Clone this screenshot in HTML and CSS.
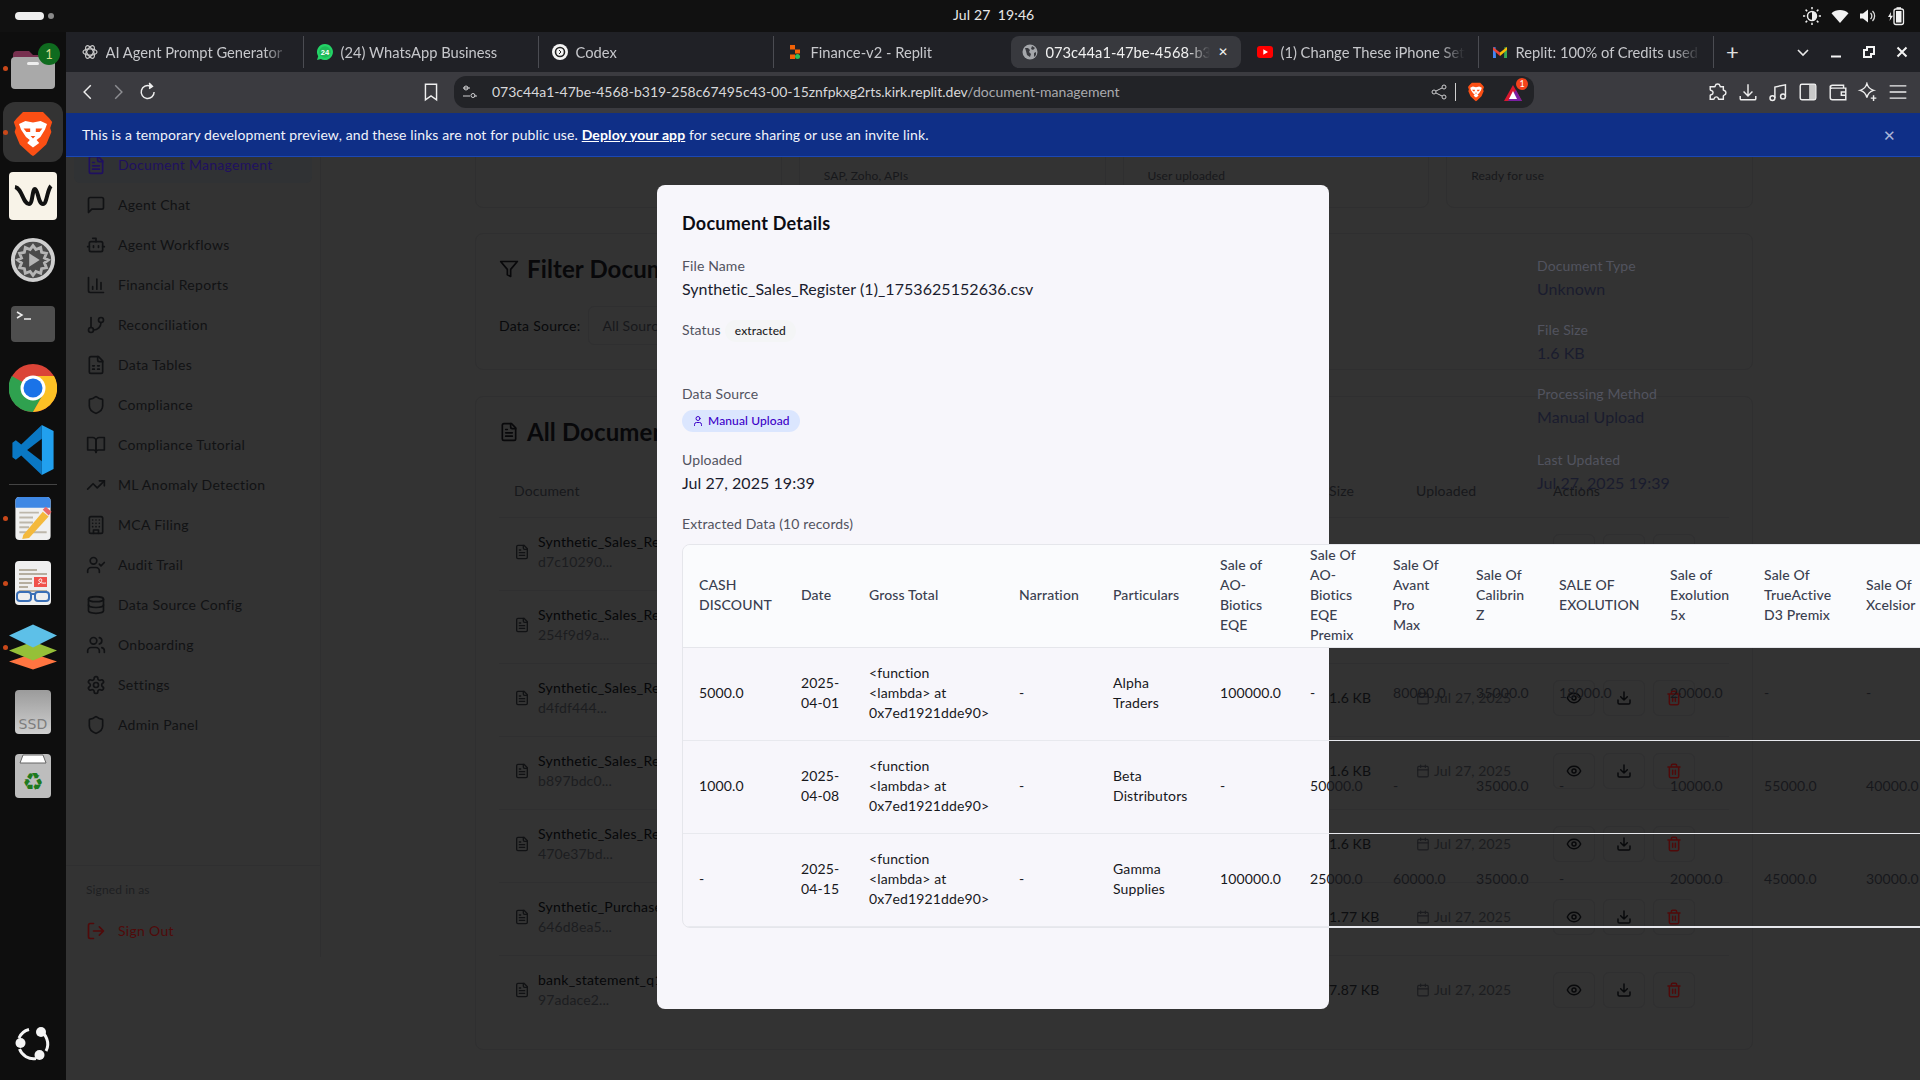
FILE: index.html
```html
<!DOCTYPE html>
<html lang="en">
<head>
    <meta charset="UTF-8">
    <title>Document Management</title>
    <link rel="stylesheet" href="styles.css">
</head>
<body>
    <!-- icon sprite -->
    <svg class="sprite" xmlns="http://www.w3.org/2000/svg">
        <symbol id="i-file" viewBox="0 0 24 24"><path d="M15 2H6a2 2 0 0 0-2 2v16a2 2 0 0 0 2 2h12a2 2 0 0 0 2-2V7Z"/><path d="M14 2v4a2 2 0 0 0 2 2h4"/><path d="M10 9H8M16 13H8M16 17H8"/></symbol>
        <symbol id="i-chat" viewBox="0 0 24 24"><path d="M21 15a2 2 0 0 1-2 2H7l-4 4V5a2 2 0 0 1 2-2h14a2 2 0 0 1 2 2z"/></symbol>
        <symbol id="i-bot" viewBox="0 0 24 24"><path d="M12 8V4H8"/><rect x="4" y="8" width="16" height="12" rx="2"/><path d="M2 14h2M20 14h2M15 13v2M9 13v2"/></symbol>
        <symbol id="i-chart" viewBox="0 0 24 24"><path d="M3 3v16a2 2 0 0 0 2 2h16"/><path d="M18 17V9M13 17V5M8 17v-3"/></symbol>
        <symbol id="i-branch" viewBox="0 0 24 24"><path d="M6 3v12"/><circle cx="18" cy="6" r="3"/><circle cx="6" cy="18" r="3"/><path d="M18 9a9 9 0 0 1-9 9"/></symbol>
        <symbol id="i-sheet" viewBox="0 0 24 24"><path d="M15 2H6a2 2 0 0 0-2 2v16a2 2 0 0 0 2 2h12a2 2 0 0 0 2-2V7Z"/><path d="M14 2v4a2 2 0 0 0 2 2h4"/><path d="M8 13h2M14 13h2M8 17h2M14 17h2"/></symbol>
        <symbol id="i-shield" viewBox="0 0 24 24"><path d="M20 13c0 5-3.5 7.5-7.66 8.95a1 1 0 0 1-.67-.01C7.5 20.5 4 18 4 13V6a1 1 0 0 1 1-1c2 0 4.5-1.2 6.24-2.72a1.17 1.17 0 0 1 1.52 0C14.51 3.81 17 5 19 5a1 1 0 0 1 1 1z"/></symbol>
        <symbol id="i-book" viewBox="0 0 24 24"><path d="M2 3h6a4 4 0 0 1 4 4v14a3 3 0 0 0-3-3H2z"/><path d="M22 3h-6a4 4 0 0 0-4 4v14a3 3 0 0 1 3-3h7z"/></symbol>
        <symbol id="i-trend" viewBox="0 0 24 24"><path d="M22 7l-8.5 8.5-5-5L2 17"/><path d="M16 7h6v6"/></symbol>
        <symbol id="i-building" viewBox="0 0 24 24"><rect x="4" y="2" width="16" height="20" rx="2"/><path d="M9 22v-4h6v4M8 6h.01M16 6h.01M12 6h.01M12 10h.01M12 14h.01M16 10h.01M16 14h.01M8 10h.01M8 14h.01"/></symbol>
        <symbol id="i-usercheck" viewBox="0 0 24 24"><path d="M16 21v-2a4 4 0 0 0-4-4H6a4 4 0 0 0-4 4v2"/><circle cx="9" cy="7" r="4"/><path d="M16 11l2 2 4-4"/></symbol>
        <symbol id="i-db" viewBox="0 0 24 24"><ellipse cx="12" cy="5" rx="9" ry="3"/><path d="M3 5V19A9 3 0 0 0 21 19V5"/><path d="M3 12A9 3 0 0 0 21 12"/></symbol>
        <symbol id="i-users" viewBox="0 0 24 24"><path d="M16 21v-2a4 4 0 0 0-4-4H6a4 4 0 0 0-4 4v2"/><circle cx="9" cy="7" r="4"/><path d="M22 21v-2a4 4 0 0 0-3-3.87M16 3.13a4 4 0 0 1 0 7.75"/></symbol>
        <symbol id="i-gear" viewBox="0 0 24 24"><path d="M12.22 2h-.44a2 2 0 0 0-2 2v.18a2 2 0 0 1-1 1.73l-.43.25a2 2 0 0 1-2 0l-.15-.08a2 2 0 0 0-2.73.73l-.22.38a2 2 0 0 0 .73 2.73l.15.1a2 2 0 0 1 1 1.72v.51a2 2 0 0 1-1 1.74l-.15.09a2 2 0 0 0-.73 2.73l.22.38a2 2 0 0 0 2.73.73l.15-.08a2 2 0 0 1 2 0l.43.25a2 2 0 0 1 1 1.73V20a2 2 0 0 0 2 2h.44a2 2 0 0 0 2-2v-.18a2 2 0 0 1 1-1.73l.43-.25a2 2 0 0 1 2 0l.15.08a2 2 0 0 0 2.73-.73l.22-.39a2 2 0 0 0-.73-2.73l-.15-.08a2 2 0 0 1-1-1.74v-.5a2 2 0 0 1 1-1.74l.15-.09a2 2 0 0 0 .73-2.73l-.22-.38a2 2 0 0 0-2.73-.73l-.15.08a2 2 0 0 1-2 0l-.43-.25a2 2 0 0 1-1-1.73V4a2 2 0 0 0-2-2z"/><circle cx="12" cy="12" r="3"/></symbol>
        <symbol id="i-logout" viewBox="0 0 24 24"><path d="M9 21H5a2 2 0 0 1-2-2V5a2 2 0 0 1 2-2h4"/><path d="M16 17l5-5-5-5M21 12H9"/></symbol>
        <symbol id="i-filter" viewBox="0 0 24 24"><path d="M22 3H2l8 9.46V19l4 2v-8.54z"/></symbol>
        <symbol id="i-eye" viewBox="0 0 24 24"><path d="M2 12s3-7 10-7 10 7 10 7-3 7-10 7-10-7-10-7Z"/><circle cx="12" cy="12" r="3"/></symbol>
        <symbol id="i-download" viewBox="0 0 24 24"><path d="M21 15v4a2 2 0 0 1-2 2H5a2 2 0 0 1-2-2v-4"/><path d="M7 10l5 5 5-5M12 15V3"/></symbol>
        <symbol id="i-trash" viewBox="0 0 24 24"><path d="M3 6h18M19 6v14c0 1-1 2-2 2H7c-1 0-2-1-2-2V6M8 6V4c0-1 1-2 2-2h4c1 0 2 1 2 2v2M10 11v6M14 11v6"/></symbol>
        <symbol id="i-cal" viewBox="0 0 24 24"><rect x="3" y="4" width="18" height="18" rx="2"/><path d="M16 2v4M8 2v4M3 10h18"/></symbol>
        <symbol id="i-user" viewBox="0 0 24 24"><path d="M19 21v-2a4 4 0 0 0-4-4H9a4 4 0 0 0-4 4v2"/><circle cx="12" cy="7" r="4"/></symbol>
        <symbol id="logo-brave" viewBox="0 0 24 24">
            <path fill="#fb4f14" d="M7 1h10l3 3 1.6 2-1 3 .6 2-2.6 6.200L13 22.400l-1 .6-1-.6-5.600-5.200L2.800 11l.6-2-1-3L4 4z"/>
            <path fill="#fff" d="M5 7 8.200 5.500l3.800.7 3.800-.7L19 7l-1 2.800-2.300 3.700-1.900 1.500 1.300 1.500L12 18.700 9.100 16.500l1.300-1.500-1.900-1.500L6 9.800z"/>
            <path fill="#fb4f14" d="M7.300 9.300h3.300V11H8.700zM16.700 9.300h-3.300V11h1.900zM10.800 13h2.400L12 14.300z"/>
        </symbol>
    </svg>

    <div class="top-bar">
        <div class="workspaces"><span class="ws-pill"></span><span class="ws-dot"></span></div>
        <div class="clock">Jul 27&nbsp;&nbsp;19:46</div>
        <div class="tray">
            <svg class="tray-icon" viewBox="0 0 20 20"><circle cx="10" cy="10" r="4.500" fill="none" stroke="#eee" stroke-width="1.500"/><path d="M10 5.500a4.500 4.500 0 0 1 0 9z" fill="#eee"/><path d="M10 1v2.200M10 16.800V19M1 10h2.200M16.800 10H19M3.600 3.600l1.600 1.600M14.800 14.800l1.600 1.600M3.600 16.400l1.600-1.600M14.800 5.200l1.600-1.600" stroke="#eee" stroke-width="1.500"/></svg>
            <svg class="tray-icon" viewBox="0 0 20 20"><path d="M10 17 1.500 7.200C6 3 14 3 18.500 7.200z" fill="#f2f2f2"/></svg>
            <svg class="tray-icon" viewBox="0 0 20 20"><path d="M2 7.500h3L10 3.500v13l-5-4H2z" fill="#f2f2f2"/><path d="M12.500 7a4 4 0 0 1 0 6M14.500 5a7 7 0 0 1 0 10" fill="none" stroke="#ddd" stroke-width="1.300"/></svg>
            <svg class="tray-icon" viewBox="0 0 20 20"><rect x="8" y="3" width="9.500" height="15.500" rx="2" fill="none" stroke="#f2f2f2" stroke-width="1.300"/><rect x="10" y="5" width="5.500" height="11.500" fill="#f2f2f2"/><rect x="10.500" y="1.200" width="4.500" height="1.800" fill="#f2f2f2"/><path d="M5 6 2 11h2.200L3.500 15 7 9.800H4.700z" fill="#f2f2f2"/></svg>
        </div>
    </div>

    <div class="desktop">
        <div class="dock">
            <div class="dock-slot running">
                <svg class="dock-icon" viewBox="0 0 44 42"><path d="M2 8a4 4 0 0 1 4-4h12l4 4h16a4 4 0 0 1 4 4v8H2z" fill="#77304f"/><rect y="10" width="44" height="32" rx="4" fill="#a9a9a9"/><rect x="16" y="15" width="12" height="3" rx="1.500" fill="#eee"/></svg>
                <span class="dock-badge">1</span>
            </div>
            <div class="dock-slot running active">
                <svg class="dock-icon brave-icon"><use href="#logo-brave"/></svg>
            </div>
            <div class="dock-slot">
                <svg class="dock-icon dock-icon-wide" viewBox="0 0 48 48"><rect width="48" height="48" rx="4" fill="#f8f3e8"/><path d="M6 15c7 1 8 17 14 17 4 0 3-15 6-15s3 15 8 15c4 0 4-14 8-18" fill="none" stroke="#111" stroke-width="4"/></svg>
            </div>
            <div class="dock-slot">
                <svg class="dock-icon" viewBox="0 0 46 46"><circle cx="23" cy="23" r="21" fill="#4a4a4a" stroke="#cfcfcf" stroke-width="4"/><path d="M23 8l3 4 5-2 1 5 5 1-2 5 4 2-4 3 2 5-5 1-1 5-5-2-3 4-3-4-5 2-1-5-5-1 2-5-4-3 4-2-2-5 5-1 1-5 5 2z" fill="none" stroke="#b5b5b5" stroke-width="3"/><path d="M19 16l11 7-11 7z" fill="#b5b5b5"/></svg>
            </div>
            <div class="dock-slot">
                <svg class="dock-icon" viewBox="0 0 44 36"><rect width="44" height="36" rx="4" fill="#4e4e4e"/><path d="M6 6l5 3-5 3" fill="none" stroke="#eee" stroke-width="1.500"/><path d="M13 13h7" stroke="#eee" stroke-width="1.500"/></svg>
            </div>
            <div class="dock-slot">
                <svg class="dock-icon dock-icon-wide" viewBox="0 0 48 48"><circle cx="24" cy="24" r="24" fill="#db4437"/><path d="M24 24 2.800 12A24 24 0 0 0 24 48l12-21z" fill="#2fa14f"/><path d="M24 12h21a24 24 0 0 1-21 36l12-21z" fill="#fcc125"/><circle cx="24" cy="24" r="12.500" fill="#fff"/><circle cx="24" cy="24" r="9.500" fill="#1a73e8"/></svg>
            </div>
            <div class="dock-slot vscode-slot">
                <svg class="dock-icon vscode-icon" viewBox="0 0 42 51"><path d="M30 0 9 20 3.500 15.500 0 18v15l3.500 2.500L9 31l21 20z" fill="#0a78c4"/><path d="M30 0 42 6v39l-12 6z" fill="#21a0ee"/><path d="M30 14v23L15 25.500z" fill="#0e0e0e"/></svg>
            </div>
            <div class="dock-sep"></div>
            <div class="dock-slot tight running">
                <svg class="dock-icon" viewBox="0 0 40 45"><rect width="36" height="44" x="2" y="1" rx="4" fill="#f0f0f0"/><path d="M2 12V5a4 4 0 0 1 4-4h28a4 4 0 0 1 4 4v7z" fill="#3f88e4"/><path d="M6 17h20M6 22h14M6 27h14M6 32h10M6 37h28" stroke="#bdb7ab" stroke-width="2"/><path d="M10 40 30 16l6 5-20 22-7 1z" fill="#f4b93c"/><path d="M30 14l3-3 6 5-3 4z" fill="#e86a6a"/></svg>
            </div>
            <div class="dock-slot tight running">
                <svg class="dock-icon" viewBox="0 0 36 44"><rect width="36" height="44" rx="4" fill="#efefef"/><path d="M4 9h18M4 13h28M4 18h13M4 22h13M4 26h9M4 30h28" stroke="#b5ae9f" stroke-width="2"/><rect x="19" y="16" width="13" height="10" fill="#f0524c"/><path d="M23 23c4-1 5-6 2-5s0 5 6 4" fill="none" stroke="#fff"/><rect x="2" y="31" width="14" height="9" rx="3" fill="none" stroke="#3a6fb6" stroke-width="2"/><rect x="20" y="31" width="14" height="9" rx="3" fill="none" stroke="#3a6fb6" stroke-width="2"/><path d="M16 33h4" stroke="#3a6fb6" stroke-width="2"/></svg>
            </div>
            <div class="dock-slot tight running">
                <svg class="dock-icon dock-icon-wide" viewBox="0 0 48 45"><path d="M24 29 0 37 24 45l24-8z" fill="#ff7541"/><path d="M24 17 0 26 24 36l24-10z" fill="#95c038"/><path d="M24 0 0 11 24 23l24-12z" fill="#5dc0e8"/></svg>
            </div>
            <div class="dock-slot tight">
                <svg class="dock-icon" viewBox="0 0 36 44"><defs><linearGradient id="ssd-grad" x2="0" y2="1"><stop offset="0" stop-color="#9b9b9b"/><stop offset="1" stop-color="#cfcfcf"/></linearGradient></defs><rect width="36" height="44" rx="4" fill="url(#ssd-grad)"/><text x="18" y="39" class="ssd-text" text-anchor="middle">SSD</text></svg>
            </div>
            <div class="dock-slot tight">
                <svg class="dock-icon" viewBox="0 0 36 44"><rect width="36" height="44" rx="4" fill="#bdbdbd"/><path d="M5 9 8 1h20l3 8z" fill="#fff" stroke="#666"/><text x="18" y="36" class="bin-text" text-anchor="middle">♻</text></svg>
            </div>
            <div class="dock-logo">
                <svg viewBox="0 0 36 36" width="36" height="36"><path d="M23 4A15 15 0 0 1 31 25M21 32.500A15 15 0 0 1 4.500 23M4 12A15 15 0 0 1 14 3.500" fill="none" stroke="#f4f4f4" stroke-width="3"/><circle cx="5.500" cy="17" r="5" fill="#f4f4f4"/><circle cx="26" cy="6" r="5" fill="#f4f4f4"/><circle cx="24.500" cy="29" r="5" fill="#f4f4f4"/></svg>
            </div>
        </div>

        <div class="browser">
            <div class="tab-strip">
                <div class="tab">
                    <svg class="favicon" viewBox="0 0 16 16"><g fill="none" stroke="#c9c9c9" stroke-width="1.200"><ellipse cx="8" cy="8" rx="7" ry="3.200"/><ellipse cx="8" cy="8" rx="7" ry="3.200" transform="rotate(60 8 8)"/><ellipse cx="8" cy="8" rx="7" ry="3.200" transform="rotate(120 8 8)"/></g></svg>
                    <span class="tab-title">AI Agent Prompt Generator</span>
                </div>
                <div class="tab">
                    <svg class="favicon" viewBox="0 0 16 16"><path d="M8 0a8 8 0 0 0-6.800 12.200L0 16l3.900-1.100A8 8 0 1 0 8 0z" fill="#23d366"/><circle cx="8" cy="8" r="5.800" fill="#1fb958"/><text x="8" y="10.500" class="wa-text" text-anchor="middle">24</text></svg>
                    <span class="tab-title">(24) WhatsApp Business</span>
                </div>
                <div class="tab">
                    <svg class="favicon" viewBox="0 0 16 16"><circle cx="8" cy="8" r="8" fill="#f4f4f4"/><circle cx="8" cy="8" r="4.500" fill="none" stroke="#222" stroke-width="1.600"/><path d="M7 6l2 2-2 2" fill="none" stroke="#222"/></svg>
                    <span class="tab-title">Codex</span>
                </div>
                <div class="tab">
                    <svg class="favicon" viewBox="0 0 16 16"><rect x="3" y="1" width="5" height="4.500" fill="#f26207"/><rect x="8" y="5.500" width="5" height="4" fill="#f26207"/><rect x="3" y="10.500" width="5" height="4.500" fill="#f26207"/><circle cx="10.500" cy="12.500" r="2.500" fill="#2dbd5a"/></svg>
                    <span class="tab-title">Finance-v2 - Replit</span>
                </div>
                <div class="tab tab-active">
                    <svg class="favicon" viewBox="0 0 16 16"><circle cx="8" cy="8" r="7.500" fill="#a5a7ab"/><path d="M3 4l3 0 2 2-1 2 2 2-1 3-3-2-1-4zM10 2l3 2-2 2-2-1zM12 9l2-1 0 3-2 2z" fill="#3a3b40"/></svg>
                    <span class="tab-title">073c44a1-47be-4568-b319-258c67495c43</span>
                    <span class="tab-close">✕</span>
                </div>
                <div class="tab">
                    <svg class="favicon" viewBox="0 0 16 16"><rect y="2" width="16" height="12" rx="3" fill="#f00"/><path d="M6.300 5.300 11 8l-4.700 2.700z" fill="#fff"/></svg>
                    <span class="tab-title">(1) Change These iPhone Settings</span>
                </div>
                <div class="tab">
                    <svg class="favicon" viewBox="0 0 16 16"><path d="M1 14V3.500L3.500 3 4 14z" fill="#4285f4"/><path d="M15 14V3.500L12.500 3 12 14z" fill="#34a853"/><path d="M1 3l7 5.500V12L1 6z" fill="#ea4335"/><path d="M15 3 8 8.500V12l7-6z" fill="#fbbc04"/></svg>
                    <span class="tab-title">Replit: 100% of Credits used</span>
                </div>
                <div class="new-tab">+</div>
                <div class="win-controls">
                    <svg class="win-btn" viewBox="0 0 16 16"><path d="M3 6l5 5 5-5" fill="none" stroke="#e8e8e8" stroke-width="1.600"/></svg>
                    <svg class="win-btn" viewBox="0 0 16 16"><path d="M3 12.500h10" stroke="#f4f4f4" stroke-width="2"/></svg>
                    <svg class="win-btn" viewBox="0 0 16 16"><path d="M6 3h7v7h-3v3H3V6h3z" fill="none" stroke="#f4f4f4" stroke-width="2"/></svg>
                    <svg class="win-btn" viewBox="0 0 16 16"><path d="M3.500 3.500l9 9M12.500 3.500l-9 9" stroke="#f4f4f4" stroke-width="2"/></svg>
                </div>
            </div>

            <div class="toolbar">
                <svg class="tool" viewBox="0 0 18 18"><path d="M11.500 3 5.500 9l6 6"/></svg>
                <svg class="tool tool-dim" viewBox="0 0 18 18"><path d="M6.500 3l6 6-6 6"/></svg>
                <svg class="tool" viewBox="0 0 18 18"><path d="M14.500 9A5.800 5.800 0 1 1 11 3.700"/><path d="M10 1l3 3-3 2" fill="#eee"/></svg>
                <svg class="tool tool-bookmark" viewBox="0 0 18 18"><path d="M4 2h10v14l-5-3.500L4 16z"/></svg>
                <div class="url-bar">
                    <svg class="url-icon" viewBox="0 0 16 16"><path d="M1 4h7M12 12h3M1 12h7"/><circle cx="4" cy="4" r="2"/><circle cx="11" cy="11.500" r="2"/></svg>
                    <span class="url-text"><span class="url-host">073c44a1-47be-4568-b319-258c67495c43-00-15znfpkxg2rts.kirk.replit.dev</span>/document-management</span>
                    <div class="url-end">
                        <svg class="url-icon" viewBox="0 0 16 16"><circle cx="13" cy="3" r="2"/><circle cx="3" cy="8" r="2"/><circle cx="13" cy="13" r="2"/><path d="M5 7l6-3M5 9l6 3"/></svg>
                        <span class="url-sep"></span>
                        <svg class="shield-icon"><use href="#logo-brave"/></svg>
                        <span class="rewards">
                            <svg class="rewards-icon" viewBox="0 0 18 16"><path d="M9 0l9 16H0z" fill="#d8182f"/><path d="M4 16h14L12 5z" fill="#7a1fa2"/><path d="M9 6l4 8H5z" fill="#fff"/></svg>
                            <span class="rewards-badge">1</span>
                        </span>
                    </div>
                </div>
                <div class="tool-group">
                    <svg class="tool" viewBox="0 0 18 18"><path d="M6.500 3.500a2.200 2.200 0 0 1 4.300 0c0 .5.300.8.800.8h2.200v2.600c0 .5.400.8.800.7a2.200 2.200 0 0 1 0 4.200c-.4 0-.8.300-.8.700v3H10c-.5 0-.8-.4-.7-.8a1.900 1.900 0 0 0-3.600 0c0 .4-.3.800-.8.800H2v-3.300c0-.5.500-.8 1-.7a2 2 0 0 0 0-3.900c-.5 0-1-.3-1-.8V4.300h3.700c.5 0 .8-.3.800-.8z"/></svg>
                    <svg class="tool" viewBox="0 0 18 18"><path d="M9 2v10M5 8.500 9 12.500l4-4M2 12.500V15a1 1 0 0 0 1 1h12a1 1 0 0 0 1-1v-2.500"/></svg>
                    <svg class="tool" viewBox="0 0 18 18"><circle cx="4" cy="14.500" r="2.200"/><circle cx="13.500" cy="13" r="2.200"/><path d="M6.200 14.500V4.500L15.700 2.500V13"/></svg>
                    <svg class="tool" viewBox="0 0 18 18"><rect x="2" y="2" width="14" height="14" rx="1.500"/><rect x="10" y="2.500" width="5.500" height="13" fill="#c9c9c9" stroke="none"/></svg>
                    <svg class="tool" viewBox="0 0 18 18"><path d="M2 5a2 2 0 0 1 2-2h10v2.500M2 5v9a2 2 0 0 0 2 2h12V5.500H3.500A1.500 1.500 0 0 1 2 5z"/><path d="M16 9h-4v3h4"/></svg>
                    <svg class="tool" viewBox="0 0 18 18"><path d="M8 1.500c1 3.500 2.500 5 6 6-3.500 1-5 2.500-6 6.500-1-4-2.500-5.500-6-6.500 3.500-1 5-2.500 6-6z"/><path d="M14 12v5M11.500 14.500h5"/></svg>
                    <svg class="tool" viewBox="0 0 18 18"><path d="M1.500 3.500h15M1.500 9h15M1.500 14.500h15"/></svg>
                </div>
            </div>

            <div class="preview-banner">
                <span>This is a temporary development preview, and these links are not for public use. <a class="banner-link">Deploy your app</a> for secure sharing or use an invite link.</span>
                <span class="banner-close">✕</span>
            </div>

            <div class="page">
                <aside class="sidebar">
                    <nav class="nav">
                        <div class="nav-item nav-active"><svg class="ic"><use href="#i-file"/></svg>Document Management</div>
                        <div class="nav-item"><svg class="ic"><use href="#i-chat"/></svg>Agent Chat</div>
                        <div class="nav-item"><svg class="ic"><use href="#i-bot"/></svg>Agent Workflows</div>
                        <div class="nav-item"><svg class="ic"><use href="#i-chart"/></svg>Financial Reports</div>
                        <div class="nav-item"><svg class="ic"><use href="#i-branch"/></svg>Reconciliation</div>
                        <div class="nav-item"><svg class="ic"><use href="#i-sheet"/></svg>Data Tables</div>
                        <div class="nav-item"><svg class="ic"><use href="#i-shield"/></svg>Compliance</div>
                        <div class="nav-item"><svg class="ic"><use href="#i-book"/></svg>Compliance Tutorial</div>
                        <div class="nav-item"><svg class="ic"><use href="#i-trend"/></svg>ML Anomaly Detection</div>
                        <div class="nav-item"><svg class="ic"><use href="#i-building"/></svg>MCA Filing</div>
                        <div class="nav-item"><svg class="ic"><use href="#i-usercheck"/></svg>Audit Trail</div>
                        <div class="nav-item"><svg class="ic"><use href="#i-db"/></svg>Data Source Config</div>
                        <div class="nav-item"><svg class="ic"><use href="#i-users"/></svg>Onboarding</div>
                        <div class="nav-item"><svg class="ic"><use href="#i-gear"/></svg>Settings</div>
                        <div class="nav-item"><svg class="ic"><use href="#i-shield"/></svg>Admin Panel</div>
                    </nav>
                    <div class="sidebar-foot">
                        <div class="signed-in">Signed in as</div>
                        <div class="sign-out"><svg class="ic"><use href="#i-logout"/></svg>Sign Out</div>
                    </div>
                </aside>

                <main class="main">
                    <div class="stat-row">
                        <div class="card stat-card"></div>
                        <div class="card stat-card">SAP, Zoho, APIs</div>
                        <div class="card stat-card">User uploaded</div>
                        <div class="card stat-card">Ready for use</div>
                    </div>

                    <section class="card filter-card">
                        <h2 class="card-title"><svg class="ic ic-title"><use href="#i-filter"/></svg>Filter Documents</h2>
                        <div class="filter-row">
                            <label class="filter-label">Data Source:</label>
                            <div class="filter-select">All Sources</div>
                        </div>
                    </section>

                    <section class="card docs-card">
                        <h2 class="card-title"><svg class="ic ic-title"><use href="#i-file"/></svg>All Documents</h2>
                        <table class="docs-table">
                            <colgroup><col class="dc-name"><col class="dc-size"><col class="dc-date"><col></colgroup>
                            <thead>
                                <tr><th>Document</th><th>Size</th><th>Uploaded</th><th>Actions</th></tr>
                            </thead>
                            <tbody>
                                <tr>
                                    <td><div class="doc-cell"><svg class="ic ic-doc"><use href="#i-file"/></svg><div><div class="doc-name">Synthetic_Sales_Register (1).csv</div><div class="doc-hash">d7c10290...</div></div></div></td>
                                    <td>1.6 KB</td>
                                    <td><div class="doc-date"><svg class="ic ic-cal"><use href="#i-cal"/></svg>Jul 27, 2025</div></td>
                                    <td><div class="doc-actions"><span class="act"><svg class="ic"><use href="#i-eye"/></svg></span><span class="act"><svg class="ic"><use href="#i-download"/></svg></span><span class="act act-del"><svg class="ic"><use href="#i-trash"/></svg></span></div></td>
                                </tr>
                                <tr>
                                    <td><div class="doc-cell"><svg class="ic ic-doc"><use href="#i-file"/></svg><div><div class="doc-name">Synthetic_Sales_Register (1).csv</div><div class="doc-hash">254f9d9a...</div></div></div></td>
                                    <td>1.6 KB</td>
                                    <td><div class="doc-date"><svg class="ic ic-cal"><use href="#i-cal"/></svg>Jul 27, 2025</div></td>
                                    <td><div class="doc-actions"><span class="act"><svg class="ic"><use href="#i-eye"/></svg></span><span class="act"><svg class="ic"><use href="#i-download"/></svg></span><span class="act act-del"><svg class="ic"><use href="#i-trash"/></svg></span></div></td>
                                </tr>
                                <tr>
                                    <td><div class="doc-cell"><svg class="ic ic-doc"><use href="#i-file"/></svg><div><div class="doc-name">Synthetic_Sales_Register (1).csv</div><div class="doc-hash">d4fdf444...</div></div></div></td>
                                    <td>1.6 KB</td>
                                    <td><div class="doc-date"><svg class="ic ic-cal"><use href="#i-cal"/></svg>Jul 27, 2025</div></td>
                                    <td><div class="doc-actions"><span class="act"><svg class="ic"><use href="#i-eye"/></svg></span><span class="act"><svg class="ic"><use href="#i-download"/></svg></span><span class="act act-del"><svg class="ic"><use href="#i-trash"/></svg></span></div></td>
                                </tr>
                                <tr>
                                    <td><div class="doc-cell"><svg class="ic ic-doc"><use href="#i-file"/></svg><div><div class="doc-name">Synthetic_Sales_Register (1).csv</div><div class="doc-hash">b897bdc0...</div></div></div></td>
                                    <td>1.6 KB</td>
                                    <td><div class="doc-date"><svg class="ic ic-cal"><use href="#i-cal"/></svg>Jul 27, 2025</div></td>
                                    <td><div class="doc-actions"><span class="act"><svg class="ic"><use href="#i-eye"/></svg></span><span class="act"><svg class="ic"><use href="#i-download"/></svg></span><span class="act act-del"><svg class="ic"><use href="#i-trash"/></svg></span></div></td>
                                </tr>
                                <tr>
                                    <td><div class="doc-cell"><svg class="ic ic-doc"><use href="#i-file"/></svg><div><div class="doc-name">Synthetic_Sales_Register (1).csv</div><div class="doc-hash">470e37bd...</div></div></div></td>
                                    <td>1.6 KB</td>
                                    <td><div class="doc-date"><svg class="ic ic-cal"><use href="#i-cal"/></svg>Jul 27, 2025</div></td>
                                    <td><div class="doc-actions"><span class="act"><svg class="ic"><use href="#i-eye"/></svg></span><span class="act"><svg class="ic"><use href="#i-download"/></svg></span><span class="act act-del"><svg class="ic"><use href="#i-trash"/></svg></span></div></td>
                                </tr>
                                <tr>
                                    <td><div class="doc-cell"><svg class="ic ic-doc"><use href="#i-file"/></svg><div><div class="doc-name">Synthetic_Purchase_Register.csv</div><div class="doc-hash">646d8ea5...</div></div></div></td>
                                    <td>1.77 KB</td>
                                    <td><div class="doc-date"><svg class="ic ic-cal"><use href="#i-cal"/></svg>Jul 27, 2025</div></td>
                                    <td><div class="doc-actions"><span class="act"><svg class="ic"><use href="#i-eye"/></svg></span><span class="act"><svg class="ic"><use href="#i-download"/></svg></span><span class="act act-del"><svg class="ic"><use href="#i-trash"/></svg></span></div></td>
                                </tr>
                                <tr>
                                    <td><div class="doc-cell"><svg class="ic ic-doc"><use href="#i-file"/></svg><div><div class="doc-name">bank_statement_q1.csv</div><div class="doc-hash">97adace2...</div></div></div></td>
                                    <td>7.87 KB</td>
                                    <td><div class="doc-date"><svg class="ic ic-cal"><use href="#i-cal"/></svg>Jul 27, 2025</div></td>
                                    <td><div class="doc-actions"><span class="act"><svg class="ic"><use href="#i-eye"/></svg></span><span class="act"><svg class="ic"><use href="#i-download"/></svg></span><span class="act act-del"><svg class="ic"><use href="#i-trash"/></svg></span></div></td>
                                </tr>
                            </tbody>
                        </table>
                    </section>
                </main>

                <!-- dialog, the data table overflows it on the right -->
                <div class="modal">
                    <h3 class="modal-title">Document Details</h3>
                    <div class="detail-grid">
                        <div>
                            <div class="detail-label">File Name</div>
                            <div class="detail-value">Synthetic_Sales_Register (1)_1753625152636.csv</div>
                        </div>
                        <div>
                            <div class="detail-label">Document Type</div>
                            <div class="detail-value">Unknown</div>
                        </div>
                        <div class="status-line">
                            <span class="detail-label">Status</span>
                            <span class="badge-status">extracted</span>
                        </div>
                        <div>
                            <div class="detail-label">File Size</div>
                            <div class="detail-value">1.6 KB</div>
                        </div>
                        <div>
                            <div class="detail-label">Data Source</div>
                            <div class="badge-source"><svg class="ic ic-badge"><use href="#i-user"/></svg>Manual Upload</div>
                        </div>
                        <div>
                            <div class="detail-label">Processing Method</div>
                            <div class="detail-value">Manual Upload</div>
                        </div>
                        <div>
                            <div class="detail-label">Uploaded</div>
                            <div class="detail-value">Jul 27, 2025 19:39</div>
                        </div>
                        <div>
                            <div class="detail-label">Last Updated</div>
                            <div class="detail-value">Jul 27, 2025 19:39</div>
                        </div>
                    </div>
                    <div class="detail-label extracted-label">Extracted Data (10 records)</div>
                    <div class="data-wrap">
                        <table class="data-table">
                            <colgroup>
                                <col class="w102"><col class="w68"><col class="w150"><col class="w94"><col class="w107"><col class="w90"><col class="w83"><col class="w83"><col class="w83"><col class="w111"><col class="w94"><col class="w102"><col class="w102">
                            </colgroup>
                            <thead>
                                <tr>
                                    <th>CASH DISCOUNT</th><th>Date</th><th>Gross Total</th><th>Narration</th><th>Particulars</th>
                                    <th>Sale of AO-Biotics EQE</th><th>Sale Of AO-Biotics EQE Premix</th><th>Sale Of Avant Pro Max</th><th>Sale Of Calibrin Z</th><th>SALE OF EXOLUTION</th><th>Sale of Exolution 5x</th><th>Sale Of TrueActive D3 Premix</th><th>Sale Of Xcelsior</th>
                                </tr>
                            </thead>
                            <tbody>
                                <tr>
                                    <td>5000.0</td><td class="date-cell">2025-<br>04-01</td><td>&lt;function &lt;lambda&gt; at 0x7ed1921dde90&gt;</td><td>-</td><td>Alpha Traders</td>
                                    <td>100000.0</td><td>-</td><td>80000.0</td><td>35000.0</td><td>18000.0</td><td>20000.0</td><td>-</td><td>-</td>
                                </tr>
                                <tr>
                                    <td>1000.0</td><td class="date-cell">2025-<br>04-08</td><td>&lt;function &lt;lambda&gt; at 0x7ed1921dde90&gt;</td><td>-</td><td>Beta Distributors</td>
                                    <td>-</td><td>50000.0</td><td>-</td><td>35000.0</td><td>-</td><td>10000.0</td><td>55000.0</td><td>40000.0</td>
                                </tr>
                                <tr>
                                    <td>-</td><td class="date-cell">2025-<br>04-15</td><td>&lt;function &lt;lambda&gt; at 0x7ed1921dde90&gt;</td><td>-</td><td>Gamma Supplies</td>
                                    <td>100000.0</td><td>25000.0</td><td>60000.0</td><td>35000.0</td><td>-</td><td>20000.0</td><td>45000.0</td><td>30000.0</td>
                                </tr>
                            </tbody>
                        </table>
                    </div>
                </div>
            </div>
        </div>
    </div>
</body>
</html>
```

FILE: styles.css
```css
html, body {
    margin: 0;
    height: 100%;
    overflow: hidden;
}

body {
    font-family: "Lato", "Noto Sans", sans-serif;
    font-size: 14px;
    line-height: 20px;
    letter-spacing: 0.12px;
    background: #111;
    color: #1c1d20;
    display: flex;
    flex-direction: column;
}

.sprite {
    display: none;
}

/* ---- desktop top bar ---- */
.top-bar {
    height: 32px;
    flex-shrink: 0;
    background: #111;
    color: #e8e8e8;
    display: flex;
    align-items: center;
    position: relative;
}

.workspaces {
    display: flex;
    align-items: center;
    gap: 4px;
    padding-left: 15px;
}

.ws-pill {
    width: 29px;
    height: 8px;
    border-radius: 4px;
    background: #eee;
}

.ws-dot {
    width: 6px;
    height: 6px;
    border-radius: 50%;
    background: #8a8a8a;
}

.clock {
    position: absolute;
    left: 953px;
    top: 5px;
}

.tray {
    margin-left: auto;
    display: flex;
    gap: 8px;
    padding-right: 14px;
}

.tray-icon {
    width: 20px;
    height: 20px;
}

/* ---- dock ---- */
.desktop {
    flex: 1;
    display: flex;
    min-height: 0;
}

.dock {
    width: 66px;
    flex-shrink: 0;
    background: #0e0e0e;
    display: flex;
    flex-direction: column;
    padding-top: 4px;
    box-sizing: border-box;
}

.dock-slot {
    height: 64px;
    flex-shrink: 0;
    display: flex;
    align-items: center;
    justify-content: center;
    position: relative;
}

.dock-slot.tight {
    height: 64.500px;
}

.dock-slot.running::before {
    content: "";
    position: absolute;
    left: 3px;
    top: 50%;
    width: 5px;
    height: 5px;
    margin-top: -2px;
    border-radius: 50%;
    background: #c9481a;
    z-index: 1;
}

.dock-slot.active::after {
    content: "";
    position: absolute;
    left: 3px;
    right: 3px;
    top: 2px;
    bottom: 2px;
    border-radius: 12px;
    background: #333;
}

.dock-icon {
    width: 44px;
    height: 44px;
    position: relative;
    z-index: 1;
}

.dock-icon-wide {
    width: 48px;
    height: 48px;
}

.brave-icon {
    margin-top: 4px;
    width: 48px;
    height: 48px;
}

.vscode-icon {
    width: 42px;
    height: 50px;
}

.dock-badge {
    position: absolute;
    left: 38px;
    top: 7px;
    width: 22px;
    height: 22px;
    border-radius: 50%;
    background: #0f6b1f;
    color: #d7dc8c;
    font-size: 13px;
    line-height: 22px;
    text-align: center;
    z-index: 2;
}

.vscode-slot {
    margin-top: -2px;
    margin-bottom: 2px;
}

.dock-sep {
    height: 1px;
    flex-shrink: 0;
    margin: 0 9px 1px;
    background: #444;
}

.ssd-text {
    font-family: "DejaVu Sans", sans-serif;
    font-size: 14px;
    fill: #7d7d7d;
}

.bin-text {
    font-family: "DejaVu Sans", sans-serif;
    font-size: 24px;
    fill: #1e7a1e;
}

.wa-text {
    font-family: "Liberation Sans", sans-serif;
    font-size: 7.500px;
    font-weight: 700;
    fill: #fff;
}

.dock-logo {
    margin-top: auto;
    padding-bottom: 18px;
    display: flex;
    justify-content: center;
}

/* ---- browser chrome ---- */
.browser {
    flex: 1;
    min-width: 0;
    display: flex;
    flex-direction: column;
}

.tab-strip {
    height: 40px;
    flex-shrink: 0;
    background: #202126;
    display: flex;
    align-items: center;
    padding-left: 2.500px;
}

.tab {
    width: 235px;
    height: 32px;
    flex-shrink: 0;
    box-sizing: border-box;
    padding: 0 13px;
    display: flex;
    align-items: center;
    gap: 8px;
    font-size: 14.700px;
    letter-spacing: 0;
    color: #c6c7cb;
    border-right: 1px solid #4b4c52;
    position: relative;
}

.tab:nth-child(4),
.tab:nth-child(5) {
    border-right-color: transparent;
}

.tab-active {
    color: #f0f0f0;
}

.tab-active::before {
    content: "";
    position: absolute;
    left: 2px;
    right: 2px;
    top: 0;
    bottom: 0;
    border-radius: 8px;
    background: #38393e;
}

.favicon {
    width: 16px;
    height: 16px;
    flex-shrink: 0;
    position: relative;
}

.tab-title {
    flex: 1;
    white-space: nowrap;
    overflow: hidden;
    position: relative;
    -webkit-mask-image: linear-gradient(to right, #000 86%, transparent);
    mask-image: linear-gradient(to right, #000 86%, transparent);
}

.tab-close {
    position: relative;
    font-size: 12px;
    color: #f2f2f2;
    margin-right: 2px;
}

.new-tab {
    width: 38px;
    text-align: center;
    font-size: 22px;
    color: #e0e0e0;
}

.win-controls {
    margin-left: auto;
    display: flex;
    gap: 17px;
    padding-right: 10px;
}

.win-btn {
    width: 16px;
    height: 16px;
}

.toolbar {
    height: 41px;
    flex-shrink: 0;
    box-sizing: border-box;
    background: #3b3b40;
    display: flex;
    align-items: center;
    padding: 0 7px 1px;
}

.tool {
    width: 30px;
    height: 20px;
    flex-shrink: 0;
    fill: none;
    stroke: #eee;
    stroke-width: 1.300;
}

.tool-dim {
    stroke: #8d8e92;
}

.tool-bookmark {
    margin-left: 253px;
}

.url-bar {
    width: 1080px;
    height: 32px;
    margin-left: 8px;
    box-sizing: border-box;
    padding: 0 10px 0 8px;
    background: #222327;
    border-radius: 12px;
    display: flex;
    align-items: center;
    gap: 14px;
    letter-spacing: 0;
    color: #a9aaae;
    flex-shrink: 0;
}

.url-host {
    color: #d8d8da;
}

.url-icon {
    width: 16px;
    height: 16px;
    fill: none;
    stroke: #d0d0d2;
    stroke-width: 1;
}

.url-end {
    margin-left: auto;
    display: flex;
    align-items: center;
    gap: 8px;
}

.url-sep {
    width: 1px;
    height: 18px;
    background: #cfcfcf;
}

.shield-icon {
    width: 20px;
    height: 22px;
    margin-left: 2px;
}

.rewards {
    position: relative;
    margin-left: 10px;
    width: 20px;
    height: 18px;
    display: block;
}

.rewards-icon {
    width: 18px;
    height: 16px;
    display: block;
    margin-top: 2px;
}

.rewards-badge {
    position: absolute;
    right: -4px;
    top: -5px;
    width: 12px;
    height: 12px;
    border-radius: 50%;
    background: #f5431c;
    color: #fff;
    font-size: 9px;
    line-height: 12px;
    text-align: center;
}

.tool-group {
    margin-left: auto;
    display: flex;
}

.preview-banner {
    height: 44px;
    flex-shrink: 0;
    box-sizing: border-box;
    background: #0f2f87;
    border-bottom: 1px solid #1c48b4;
    color: #f1f3fa;
    display: flex;
    align-items: center;
    justify-content: space-between;
    padding: 0 24px 0 16px;
}

.banner-link {
    font-weight: 700;
    text-decoration: underline;
    color: #fff;
}

.banner-close {
    font-size: 15px;
    color: #aab5d8;
}

/* ---- page behind the dialog ---- */
.page {
    flex: 1;
    min-height: 0;
    background: #333;
    display: flex;
    position: relative;
    overflow: hidden;
}

.sidebar {
    width: 255px;
    height: 800px;
    flex-shrink: 0;
    box-sizing: border-box;
    border-right: 1px solid #2f2f30;
    display: flex;
    flex-direction: column;
}

.nav {
    padding: 0 8px;
    margin-top: -10px;
    height: 718px;
    box-sizing: border-box;
    display: flex;
    flex-direction: column;
    gap: 4px;
}

.nav-item {
    height: 36px;
    flex-shrink: 0;
    display: flex;
    align-items: center;
    gap: 12px;
    padding-left: 12px;
    border-radius: 6px;
    letter-spacing: 0.3px;
    color: #111214;
}

.nav-active {
    background: #303234;
    color: #1f1060;
}

.ic {
    width: 20px;
    height: 20px;
    flex-shrink: 0;
    fill: none;
    stroke: currentColor;
    stroke-width: 2;
    stroke-linecap: round;
    stroke-linejoin: round;
}

.sidebar-foot {
    border-top: 1px solid #2f2f30;
    padding: 16px 0 0;
}

.signed-in {
    font-size: 12px;
    line-height: 16px;
    color: #1e1f22;
    padding-left: 20px;
}

.sign-out {
    display: flex;
    align-items: center;
    gap: 12px;
    margin-top: 23px;
    padding-left: 20px;
    letter-spacing: 0.3px;
    color: #500a0a;
}

.main {
    width: 1278px;
    margin-left: 154px;
    margin-top: -69px;
    flex-shrink: 0;
}

.card {
    box-sizing: border-box;
    border: 1px solid #2f2f30;
    border-radius: 8px;
}

.stat-row {
    display: grid;
    grid-template-columns: repeat(4, 1fr);
    gap: 17px;
}

.stat-card {
    height: 120px;
    padding: 79px 24px 0;
    font-size: 12px;
    line-height: 16px;
    color: #17181b;
}

.card-title {
    margin: 0;
    font-size: 24px;
    line-height: 32px;
    font-weight: 700;
    color: #08080a;
    display: flex;
    align-items: center;
    gap: 8px;
}

.ic-title {
    width: 20px;
    height: 20px;
}

.filter-card {
    margin-top: 25px;
    height: 137px;
    padding: 19px 23px;
}

.filter-row {
    display: flex;
    align-items: center;
    gap: 8px;
    margin-top: 21px;
}

.filter-label {
    color: #08090b;
    letter-spacing: 0.25px;
}

.filter-select {
    width: 200px;
    height: 39px;
    box-sizing: border-box;
    border: 1px solid #2f2f30;
    border-radius: 6px;
    padding: 9px 13px;
    color: #17181b;
}

.docs-card {
    margin-top: 26px;
    height: 654px;
    padding: 19px 23px;
}

.docs-table {
    width: 100%;
    margin-top: 17px;
    border-collapse: collapse;
    table-layout: fixed;
}

.dc-name {
    width: 814px;
}

.dc-size {
    width: 87px;
}

.dc-date {
    width: 137px;
}

.docs-table th {
    height: 52px;
    padding: 0 16px;
    text-align: left;
    font-weight: 400;
    color: #17181b;
    border-bottom: 1px solid #2f2f30;
    box-sizing: border-box;
}

.docs-table th:first-child {
    padding-left: 15px;
}

.docs-table td {
    height: 73px;
    padding: 0 16px 3px;
    box-sizing: border-box;
    border-bottom: 1px solid #2f2f30;
    color: #0d0e10;
}

.docs-table tr:last-child td {
    border-bottom: none;
}

.doc-cell {
    display: flex;
    align-items: center;
    gap: 8px;
    margin-left: -1px;
}

.ic-doc {
    width: 16px;
    height: 16px;
    color: #111214;
}

.doc-name {
    color: #060709;
    letter-spacing: 0.25px;
}

.doc-hash {
    color: #1c1d20;
}

.doc-date {
    display: flex;
    align-items: center;
    gap: 4px;
    color: #1c1d20;
}

.ic-cal {
    width: 14px;
    height: 14px;
}

.doc-actions {
    display: flex;
    gap: 8px;
}

.act {
    width: 42px;
    height: 36px;
    box-sizing: border-box;
    border: 1px solid #2f2f30;
    border-radius: 6px;
    display: flex;
    align-items: center;
    justify-content: center;
    color: #08090b;
}

.act .ic {
    width: 16px;
    height: 16px;
    stroke-width: 2.200;
}

.act-del {
    color: #500a0a;
}

/* ---- dialog ---- */
.modal {
    position: absolute;
    left: 591px;
    top: 28px;
    width: 672px;
    height: 824px;
    box-sizing: border-box;
    padding: 24px 25px;
    background: #f7f6fb;
    border-radius: 8px;
}

.modal-title {
    margin: 0 0 19px;
    font-size: 18px;
    line-height: 28px;
    font-weight: 700;
    letter-spacing: 0.25px;
    color: #0c0d14;
}

.detail-grid {
    width: 1694px;
    display: grid;
    grid-template-columns: 839px 839px;
    column-gap: 16px;
    row-gap: 19px;
}

.detail-label {
    color: #52535f;
}

.detail-value {
    margin-top: 1px;
    font-size: 16px;
    line-height: 24px;
    letter-spacing: 0.05px;
    color: #1a1c2e;
}

.status-line {
    display: flex;
    align-items: flex-start;
    gap: 4px;
    height: 45px;
}

.badge-status {
    height: 22px;
    padding: 0 10px;
    border-radius: 11px;
    background: #f4f5f6;
    font-size: 12px;
    line-height: 22px;
    font-weight: 500;
    color: #1c1d24;
}

.badge-source {
    display: flex;
    width: fit-content;
    align-items: center;
    gap: 4px;
    height: 22px;
    margin-top: 6px;
    margin-bottom: -1px;
    padding: 0 10px;
    border-radius: 11px;
    background: #dbe6fe;
    font-size: 12px;
    font-weight: 500;
    color: #3c00c8;
}

.ic-badge {
    width: 12px;
    height: 12px;
}

.extracted-label {
    margin-top: 19px;
}

.data-wrap {
    width: 1694px;
    margin-top: 10px;
    border: 1px solid #e5e6eb;
    border-radius: 8px 0 0 8px;
    box-sizing: border-box;
    overflow: hidden;
}

.data-table {
    border-collapse: collapse;
    table-layout: fixed;
    width: 1269px;
}

.w102 { width: 102px; }
.w68 { width: 68px; }
.w150 { width: 150px; }
.w94 { width: 94px; }
.w107 { width: 107px; }
.w90 { width: 90px; }
.w83 { width: 83px; }
.w111 { width: 111px; }

.data-table th {
    padding: 0 16px 2px;
    height: 102px;
    box-sizing: border-box;
    text-align: left;
    font-weight: 500;
    color: #3a3f50;
    background: #fafbfd;
    border-bottom: 1px solid #e5e6eb;
}

.data-table td {
    padding: 15px 16px 17px;
    height: 93px;
    box-sizing: border-box;
    color: #17181c;
    border-bottom: 1px solid #e8e9ee;
}

.data-table .date-cell {
    white-space: nowrap;
}
```
